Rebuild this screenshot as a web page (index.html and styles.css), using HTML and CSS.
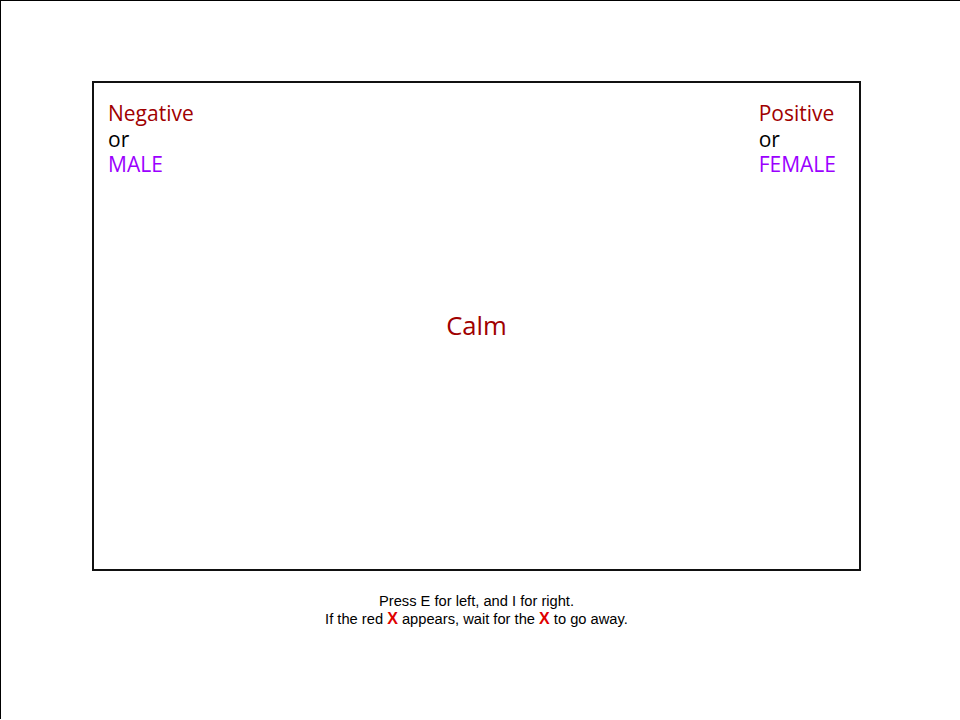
FILE: index.html
```html
<!DOCTYPE html>
<html>
<head>
<meta charset="utf-8">
<link rel="stylesheet" href="styles.css">
</head>
<body>
<div class="page">
  <div class="stage">
    <div class="labels">
      <div class="label">
        <div class="attr">Negative</div>
        <div class="or">or</div>
        <div class="cat">MALE</div>
      </div>
      <div class="label">
        <div class="attr">Positive</div>
        <div class="or">or</div>
        <div class="cat">FEMALE</div>
      </div>
    </div>
    <div class="stimulus">Calm</div>
  </div>
  <div class="instructions">
    <p>Press E for left, and I for right.</p>
    <p>If the red <span class="x">X</span> appears, wait for the <span class="x">X</span> to go away.</p>
  </div>
</div>
</body>
</html>
```

FILE: styles.css
```css
html, body {
  margin: 0;
  padding: 0;
  background: #fff;
}
.page {
  border-top: 1px solid #000;
  border-left: 1px solid #000;
  height: 719px;
  box-sizing: border-box;
  padding-top: 80px;
  padding-left: 91px;
}
.stage {
  width: 769px;
  height: 490px;
  box-sizing: border-box;
  border: 2px solid #111;
  display: grid;
  grid-template-columns: 1fr;
  grid-template-rows: 1fr;
  font-family: "Open Sans", "Noto Sans", sans-serif;
}
.labels {
  grid-area: 1 / 1;
  align-self: start;
  display: flex;
  justify-content: space-between;
  padding: 18px 23px 0 14px;
  font-size: 21px;
  line-height: 25.5px;
}
.attr { color: #a00000; }
.or { color: #000; }
.cat { color: #9b00ff; }
.stimulus {
  grid-area: 1 / 1;
  align-self: center;
  justify-self: center;
  color: #a00000;
  font-size: 25.7px;
  line-height: 30px;
}
.instructions {
  width: 769px;
  margin-top: 21px;
  text-align: center;
  font-family: "Liberation Sans", Arial, sans-serif;
  font-size: 14.7px;
  line-height: 18px;
  color: #000;
}
.instructions p { margin: 0; }
.x {
  color: #e00000;
  font-weight: bold;
  font-size: 16px;
}
```
